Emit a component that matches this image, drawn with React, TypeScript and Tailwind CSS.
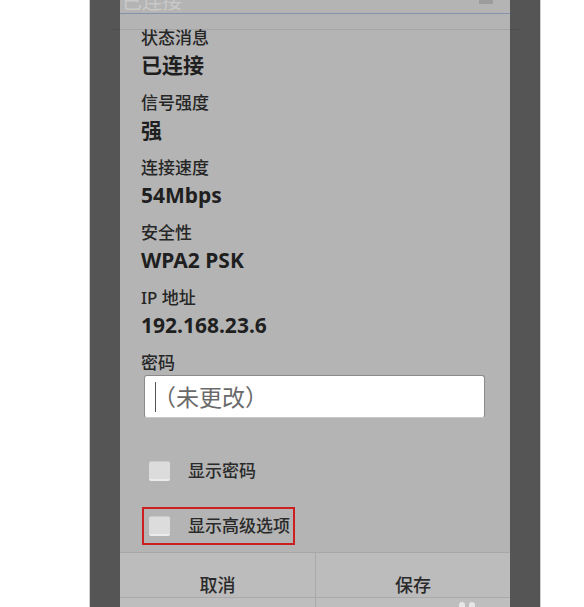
const font = { fontFamily: '"Noto Sans", "Noto Sans CJK SC", sans-serif' };

const rows = [
  { label: '状态消息', value: '已连接' },
  { label: '信号强度', value: '强' },
  { label: '连接速度', value: '54Mbps' },
  { label: '安全性', value: 'WPA2 PSK' },
  { label: 'IP 地址', value: '192.168.23.6' },
];

function Checkbox() {
  return (
    <div className="w-[21px] h-[20px] rounded-[2px] bg-[#dcdcdc] border-b-2 border-b-[#ececec] border-t border-t-[#c9c9c9]" />
  );
}

export default function App() {
  return (
    <div className="flex h-[607px] w-[584px] overflow-hidden bg-white" style={font}>
      <div className="w-[89px] shrink-0" />

      {/* phone frame */}
      <div className="relative flex h-full shrink-0 border-x border-[#cfcfcf] bg-[#555555] px-[30px]">
        <div className="pointer-events-none absolute left-[20px] top-[29px] h-px w-[410px] bg-black/[0.08]" />

        {/* dialog */}
        <div className="flex h-full w-[390px] flex-col bg-[#b4b4b4] text-[#2b2b2b]">
          <div className="flex h-[13px] items-start justify-between overflow-hidden pl-[2px] pr-[17px]">
            <span className="-mt-[8px] text-[20px] leading-[20px] text-[#c9c9c9]">已连接</span>
            <div className="h-[4px] w-[14px] bg-[#9c9c9c]" />
          </div>
          <div className="h-px bg-[#8492ae]" />

          <div className="flex flex-col pl-[21px] pt-[13px]">
            {rows.map(r => (
              <div key={r.label} className="flex h-[65px] flex-col">
                <div className="h-[22px] text-[17px] font-medium leading-[22px] text-[#262626]">{r.label}</div>
                <div className="h-[32px] text-[21px] font-bold leading-[32px] text-[#1f1f1f]">{r.value}</div>
              </div>
            ))}

            <div className="h-[23px] text-[17px] font-medium leading-[22px] text-[#262626]">密码</div>
            <div className="relative ml-[3px] flex h-[43px] w-[341px] items-center rounded-[3px] border border-[#8a8a8a] border-b-[#c8c8c8] bg-white pl-[8px]">
              <div className="absolute left-[10px] top-[6px] h-[30px] w-px bg-[#555]" />
              <span className="text-[23px] leading-[30px] text-[#6a6a6a]">（未更改）</span>
            </div>

            <div className="ml-[1px] mt-[34px] flex h-[38px] w-fit items-center border-2 border-transparent pl-[5px] pr-[3px]">
              <Checkbox />
              <span className="ml-[18px] text-[17px] font-medium leading-[22px] text-[#2a2a2a]">显示密码</span>
            </div>
            <div className="ml-[1px] mt-[17px] flex h-[38px] w-fit items-center border-2 border-[#cc1f1f] pl-[5px] pr-[3px]">
              <Checkbox />
              <span className="ml-[18px] text-[17px] font-medium leading-[22px] text-[#2a2a2a]">显示高级选项</span>
            </div>
          </div>

          <div className="flex-1" />

          <div className="flex h-[45px] border-t border-[#a7a7a7] bg-[#bcbcbc]">
            <div className="flex w-[195px] items-end justify-center pb-[1px]">
              <span className="text-[18px] font-medium leading-[22px] text-[#2a2a2a]">取消</span>
            </div>
            <div className="flex flex-1 items-end justify-center border-l border-[#a9a9a9] pb-[1px]">
              <span className="text-[18px] font-medium leading-[22px] text-[#2a2a2a]">保存</span>
            </div>
          </div>
          <div className="flex h-[10px] border-t border-[#a9a9a9] bg-[#bebebe]">
            <div className="w-[195px]" />
            <div className="flex flex-1 items-end gap-[4px] border-l border-[#a9a9a9] pl-[143px]">
              <div className="h-[5px] w-[6px] rounded-t-full bg-[#e6e6e6]" />
              <div className="h-[5px] w-[6px] rounded-t-full bg-[#e6e6e6]" />
            </div>
          </div>
        </div>
      </div>
    </div>
  );
}
